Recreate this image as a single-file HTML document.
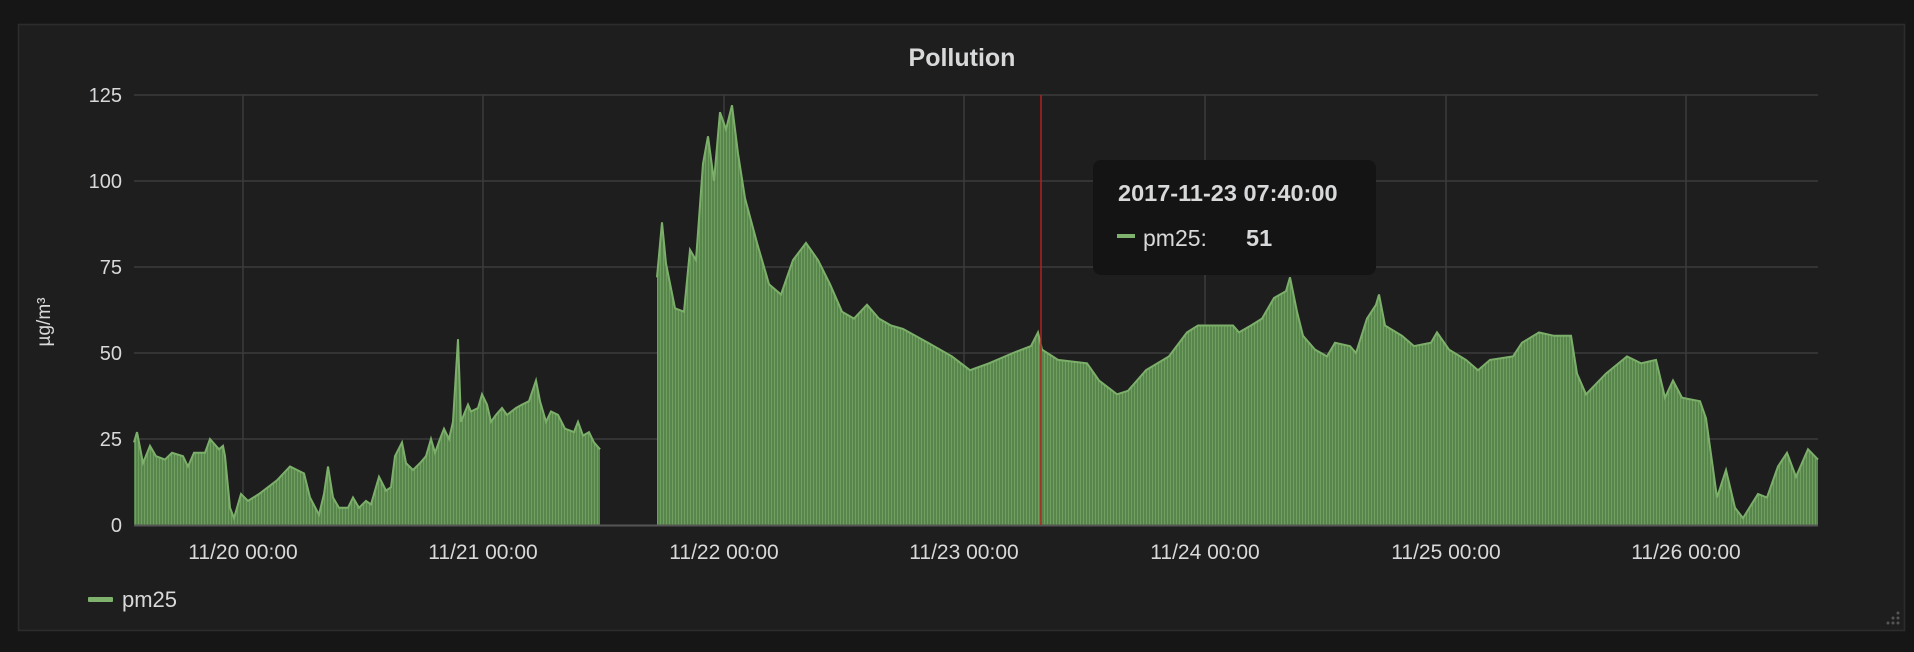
<!DOCTYPE html>
<html><head><meta charset="utf-8"><style>
html,body{margin:0;padding:0;background:#161616;width:1914px;height:652px;overflow:hidden}
svg{position:absolute;left:0;top:0}
text{font-family:"Liberation Sans",sans-serif}
</style></head><body>
<svg width="1914" height="652" viewBox="0 0 1914 652" xmlns="http://www.w3.org/2000/svg">
<defs>
<pattern id="bars" width="3" height="10" patternUnits="userSpaceOnUse">
<rect width="3" height="10" fill="#58854b"/>
<rect x="0" width="1" height="10" fill="#70a060"/>
</pattern>
</defs>
<rect x="18.5" y="24.5" width="1886" height="606" fill="#1f1e1f" stroke="#2c2c2c" stroke-width="1.5"/>
<text x="962" y="66" fill="#d8d9da" font-size="25" font-weight="bold" text-anchor="middle">Pollution</text>
<g stroke="#3b3b3b" stroke-width="1.5">
<line x1="134" y1="95" x2="1818" y2="95"/>
<line x1="134" y1="181" x2="1818" y2="181"/>
<line x1="134" y1="267" x2="1818" y2="267"/>
<line x1="134" y1="353" x2="1818" y2="353"/>
<line x1="134" y1="439" x2="1818" y2="439"/>
<line x1="243" y1="95" x2="243" y2="525"/>
<line x1="483" y1="95" x2="483" y2="525"/>
<line x1="724" y1="95" x2="724" y2="525"/>
<line x1="964" y1="95" x2="964" y2="525"/>
<line x1="1205" y1="95" x2="1205" y2="525"/>
<line x1="1446" y1="95" x2="1446" y2="525"/>
<line x1="1686" y1="95" x2="1686" y2="525"/>
</g>
<g id="series"></g>
<line x1="134" y1="525.5" x2="1818" y2="525.5" stroke="#555" stroke-width="2"/>
<line x1="1041" y1="95" x2="1041" y2="525" stroke="#b02020" stroke-width="1.5"/>
<g fill="#d8d9da" font-size="20" text-anchor="end">
<text x="122" y="102">125</text>
<text x="122" y="188">100</text>
<text x="122" y="274">75</text>
<text x="122" y="360">50</text>
<text x="122" y="446">25</text>
<text x="122" y="532">0</text>
</g>
<text transform="translate(50,322) rotate(-90)" fill="#d8d9da" font-size="19" text-anchor="middle">µg/m³</text>
<g fill="#d8d9da" font-size="21" text-anchor="middle">
<text x="243" y="559">11/20 00:00</text>
<text x="483" y="559">11/21 00:00</text>
<text x="724" y="559">11/22 00:00</text>
<text x="964" y="559">11/23 00:00</text>
<text x="1205" y="559">11/24 00:00</text>
<text x="1446" y="559">11/25 00:00</text>
<text x="1686" y="559">11/26 00:00</text>
</g>
<rect x="88" y="597" width="25" height="5" rx="1" fill="#7eb26d"/>
<text x="122" y="607" fill="#d8d9da" font-size="22">pm25</text>
<rect x="1093" y="160" width="283" height="115" rx="8" fill="#141414"/>
<text x="1118" y="201" fill="#d8d9da" font-size="23.5" font-weight="bold">2017-11-23 07:40:00</text>
<rect x="1117" y="234" width="18" height="4" fill="#7eb26d"/>
<text x="1143" y="246" fill="#d8d9da" font-size="23">pm25:</text>
<text x="1246" y="246" fill="#d8d9da" font-size="23.5" font-weight="bold">51</text>
<g fill="#555">
<circle cx="1898" cy="623" r="1.5"/><circle cx="1893" cy="623" r="1.5"/><circle cx="1888" cy="623" r="1.5"/>
<circle cx="1898" cy="618" r="1.5"/><circle cx="1893" cy="618" r="1.5"/><circle cx="1898" cy="613" r="1.5"/>
</g>
</svg>
<script>
(function(){
var s1=[[134,24],[137,27],[143,18],[150,23],[156,20],[165,19],[172,21],[183,20],[188,17],[194,21],[205,21],[210,25],[219,22],[223,23],[225,20],[230,5],[234,2],[241,9],[248,7],[259,9],[268,11],[277,13],[290,17],[304,15],[310,8],[319,3],[324,9],[328,17],[333,8],[339,5],[348,5],[353,8],[359,5],[366,7],[371,6],[379,14],[386,10],[391,11],[395,20],[402,24],[406,18],[413,16],[420,18],[426,20],[431,25],[435,21],[440,25],[444,28],[449,25],[453,30],[458,54],[461,30],[468,35],[471,33],[478,34],[482,38],[487,35],[491,30],[496,32],[502,34],[507,32],[516,34],[522,35],[529,36],[536,42],[540,36],[546,30],[551,33],[558,32],[565,28],[574,27],[578,30],[583,26],[589,27],[594,24],[600,22]];
var s2=[[657,72],[662,88],[666,76],[675,63],[684,62],[690,80],[696,77],[703,105],[708,113],[714,100],[720,120],[726,115],[732,122],[738,108],[745,95],[757,82],[769,70],[781,67],[793,77],[806,82],[818,77],[830,70],[842,62],[854,60],[867,64],[879,60],[891,58],[903,57],[928,53],[952,49],[970,45],[989,47],[1013,50],[1031,52],[1038,56],[1042,51],[1058,48],[1087,47],[1099,42],[1117,38],[1128,39],[1146,45],[1169,49],[1187,56],[1198,58],[1233,58],[1239,56],[1251,58],[1262,60],[1274,66],[1286,68],[1290,72],[1297,62],[1303,55],[1315,51],[1327,49],[1335,53],[1350,52],[1356,50],[1367,60],[1376,64],[1379,67],[1385,58],[1402,55],[1414,52],[1431,53],[1437,56],[1449,51],[1466,48],[1478,45],[1490,48],[1513,49],[1522,53],[1539,56],[1554,55],[1571,55],[1577,44],[1586,38],[1606,44],[1627,49],[1641,47],[1656,48],[1665,37],[1673,42],[1682,37],[1700,36],[1706,31],[1717,8],[1726,16],[1735,5],[1743,2],[1758,9],[1767,8],[1778,17],[1787,21],[1796,14],[1808,22],[1818,19]];
function y(v){return (525-v*3.44).toFixed(1);}
var g=document.getElementById('series'),ns='http://www.w3.org/2000/svg';
[s1,s2].forEach(function(s){
 var line=s.map(function(p,i){return (i?'L':'M')+p[0]+' '+y(p[1]);}).join(' ');
 var area=line+' L'+s[s.length-1][0]+' 525 L'+s[0][0]+' 525 Z';
 var a=document.createElementNS(ns,'path');a.setAttribute('d',area);a.setAttribute('fill','url(#bars)');g.appendChild(a);
 var l=document.createElementNS(ns,'path');l.setAttribute('d',line);l.setAttribute('fill','none');l.setAttribute('stroke','#7cb06a');l.setAttribute('stroke-width','2');g.appendChild(l);
});
})();
</script>
</body></html>
